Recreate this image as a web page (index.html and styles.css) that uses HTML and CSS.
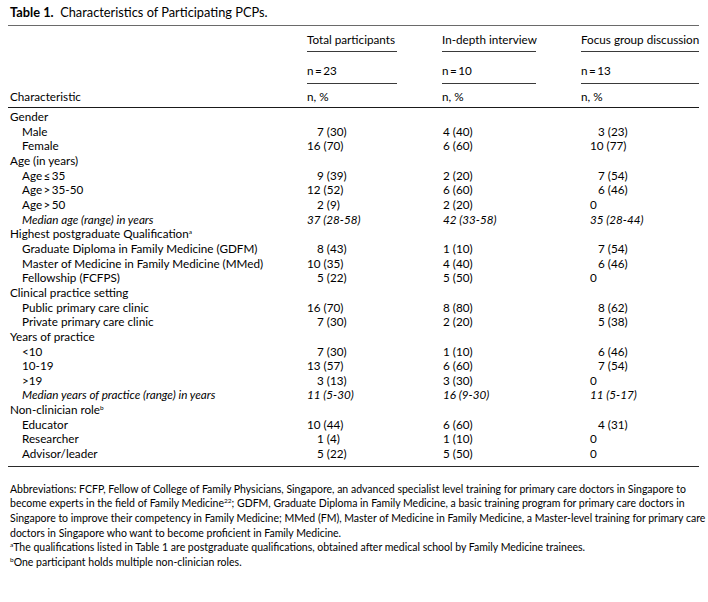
FILE: index.html
```html
<!DOCTYPE html>
<html lang="en">
<head>
<meta charset="utf-8">
<title>Table 1. Characteristics of Participating PCPs.</title>
<link rel="stylesheet" href="styles.css">
</head>
<body>
<div class="page">
  <p class="caption"><b>Table 1.</b>&nbsp; Characteristics of Participating PCPs.</p>
  <table class="tbl">
    <colgroup>
      <col class="c-label"><col class="c-total"><col class="c-idi"><col class="c-fgd">
    </colgroup>
    <thead>
      <tr class="h1">
        <th></th>
        <th><div class="hd w-total">Total participants</div></th>
        <th><div class="hd w-idi">In-depth interview</div></th>
        <th><div class="hd w-fgd">Focus group discussion</div></th>
      </tr>
      <tr class="h2">
        <th></th>
        <th><div class="hd w-total">n&#8201;=&#8201;23</div></th>
        <th><div class="hd w-idi">n&#8201;=&#8201;10</div></th>
        <th><div class="hd w-fgd">n&#8201;=&#8201;13</div></th>
      </tr>
      <tr class="h3">
        <th class="lab">Characteristic</th>
        <th><div class="hd0">n, %</div></th>
        <th><div class="hd0">n, %</div></th>
        <th><div class="hd0">n, %</div></th>
      </tr>
    </thead>
    <tbody>
      <tr class="cat first"><td>Gender</td><td></td><td></td><td></td></tr>
      <tr><td class="sub">Male</td><td class="t pad">7 (30)</td><td class="i">4 (40)</td><td class="f pad">3 (23)</td></tr>
      <tr><td class="sub">Female</td><td class="t">16 (70)</td><td class="i">6 (60)</td><td class="f">10 (77)</td></tr>
      <tr class="cat"><td>Age (in years)</td><td></td><td></td><td></td></tr>
      <tr><td class="sub">Age&#8201;&le;&#8201;35</td><td class="t pad">9 (39)</td><td class="i">2 (20)</td><td class="f pad">7 (54)</td></tr>
      <tr><td class="sub">Age&#8201;&gt;&#8201;35-50</td><td class="t">12 (52)</td><td class="i">6 (60)</td><td class="f pad">6 (46)</td></tr>
      <tr><td class="sub">Age&#8201;&gt;&#8201;50</td><td class="t pad">2 (9)</td><td class="i">2 (20)</td><td class="f">0</td></tr>
      <tr class="med"><td class="sub">Median age (range) in years</td><td class="t">37 (28-58)</td><td class="i">42 (33-58)</td><td class="f">35 (28-44)</td></tr>
      <tr class="cat"><td>Highest postgraduate Qualification<sup>a</sup></td><td></td><td></td><td></td></tr>
      <tr><td class="sub">Graduate Diploma in Family Medicine (GDFM)</td><td class="t pad">8 (43)</td><td class="i">1 (10)</td><td class="f pad">7 (54)</td></tr>
      <tr><td class="sub">Master of Medicine in Family Medicine (MMed)</td><td class="t">10 (35)</td><td class="i">4 (40)</td><td class="f pad">6 (46)</td></tr>
      <tr><td class="sub">Fellowship (FCFPS)</td><td class="t pad">5 (22)</td><td class="i">5 (50)</td><td class="f">0</td></tr>
      <tr class="cat"><td>Clinical practice setting</td><td></td><td></td><td></td></tr>
      <tr><td class="sub">Public primary care clinic</td><td class="t">16 (70)</td><td class="i">8 (80)</td><td class="f pad">8 (62)</td></tr>
      <tr><td class="sub">Private primary care clinic</td><td class="t pad">7 (30)</td><td class="i">2 (20)</td><td class="f pad">5 (38)</td></tr>
      <tr class="cat"><td>Years of practice</td><td></td><td></td><td></td></tr>
      <tr><td class="sub">&lt;10</td><td class="t pad">7 (30)</td><td class="i">1 (10)</td><td class="f pad">6 (46)</td></tr>
      <tr><td class="sub">10-19</td><td class="t">13 (57)</td><td class="i">6 (60)</td><td class="f pad">7 (54)</td></tr>
      <tr><td class="sub">&gt;19</td><td class="t pad">3 (13)</td><td class="i">3 (30)</td><td class="f">0</td></tr>
      <tr class="med"><td class="sub">Median years of practice (range) in years</td><td class="t">11 (5-30)</td><td class="i">16 (9-30)</td><td class="f">11 (5-17)</td></tr>
      <tr class="cat"><td>Non-clinician role<sup>b</sup></td><td></td><td></td><td></td></tr>
      <tr><td class="sub">Educator</td><td class="t">10 (44)</td><td class="i">6 (60)</td><td class="f pad">4 (31)</td></tr>
      <tr><td class="sub">Researcher</td><td class="t pad">1 (4)</td><td class="i">1 (10)</td><td class="f">0</td></tr>
      <tr class="last"><td class="sub">Advisor/leader</td><td class="t pad">5 (22)</td><td class="i">5 (50)</td><td class="f">0</td></tr>
    </tbody>
  </table>
  <div class="notes">
    <p>Abbreviations: FCFP, Fellow of College of Family Physicians, Singapore, an advanced specialist level training for primary care doctors in Singapore to<br>become experts in the field of Family Medicine<sup>22</sup>; GDFM, Graduate Diploma in Family Medicine, a basic training program for primary care doctors in<br>Singapore to improve their competency in Family Medicine; MMed (FM), Master of Medicine in Family Medicine, a Master-level training for primary care<br>doctors in Singapore who want to become proficient in Family Medicine.</p>
    <p><sup>a</sup>The qualifications listed in Table 1 are postgraduate qualifications, obtained after medical school by Family Medicine trainees.</p>
    <p><sup>b</sup>One participant holds multiple non-clinician roles.</p>
  </div>
</div>
</body>
</html>
```

FILE: styles.css
```css
html, body {
  margin: 0;
  padding: 0;
  background: #ffffff;
}
body {
  font-family: "Lato", "Open Sans", "Liberation Sans", sans-serif;
  font-size: 11.7px;
  color: #000000;
}
.page {
  padding: 5px 8px 0 8px;
  width: 691px;
}
.caption {
  margin: 0;
  font-size: 12.8px;
  line-height: 14px;
  padding: 0 0 6px 2px;
  border-bottom: 1.5px solid #6a6a6a;
}
.caption b {
  font-weight: 700;
}
.tbl {
  width: 691px;
  border-collapse: collapse;
  border-spacing: 0;
  table-layout: fixed;
}
.c-label { width: 299px; }
.c-total { width: 135px; }
.c-idi { width: 139px; }
.c-fgd { width: 118px; }
th, td {
  padding: 0;
  text-align: left;
  font-weight: 400;
  vertical-align: top;
  white-space: nowrap;
}
.hd {
  border-bottom: 1px solid #3a3a3a;
  line-height: 14px;
}
.w-total { width: 90px; }
.w-idi { width: 94px; }
.w-fgd { width: 118px; }
.h1 .hd { padding-top: 6px; padding-bottom: 5px; }
.h2 .hd { padding-top: 11px; padding-bottom: 6px; }
.h3 th { line-height: 14px; padding-top: 5px; padding-bottom: 4px; }
.hd0 { line-height: 14px; }
thead .h3 th { border-bottom: 1px solid #1a1a1a; }
.lab { padding-left: 2px; }
tbody td {
  line-height: 14.65px;
  height: 14.65px;
}
tbody tr.first td { padding-top: 1px; }
tbody tr.last td { padding-bottom: 5px; border-bottom: 1px solid #2a2a2a; }
.cat td:first-child { padding-left: 2px; }
td.sub { padding-left: 14px; }
td.t { padding-left: 0; }
td.t.pad { padding-left: 10px; }
td.i { padding-left: 1px; }
td.f { padding-left: 9px; }
td.f.pad { padding-left: 17px; }
.med td { font-style: italic; }
sup {
  font-size: 6.5px;
  line-height: 0;
  vertical-align: 4px;
}
.notes {
  padding-top: 15px;
  padding-left: 2px;
  font-size: 10.5px;
}
.notes p {
  margin: 0;
  line-height: 14.6px;
  white-space: nowrap;
}
```
